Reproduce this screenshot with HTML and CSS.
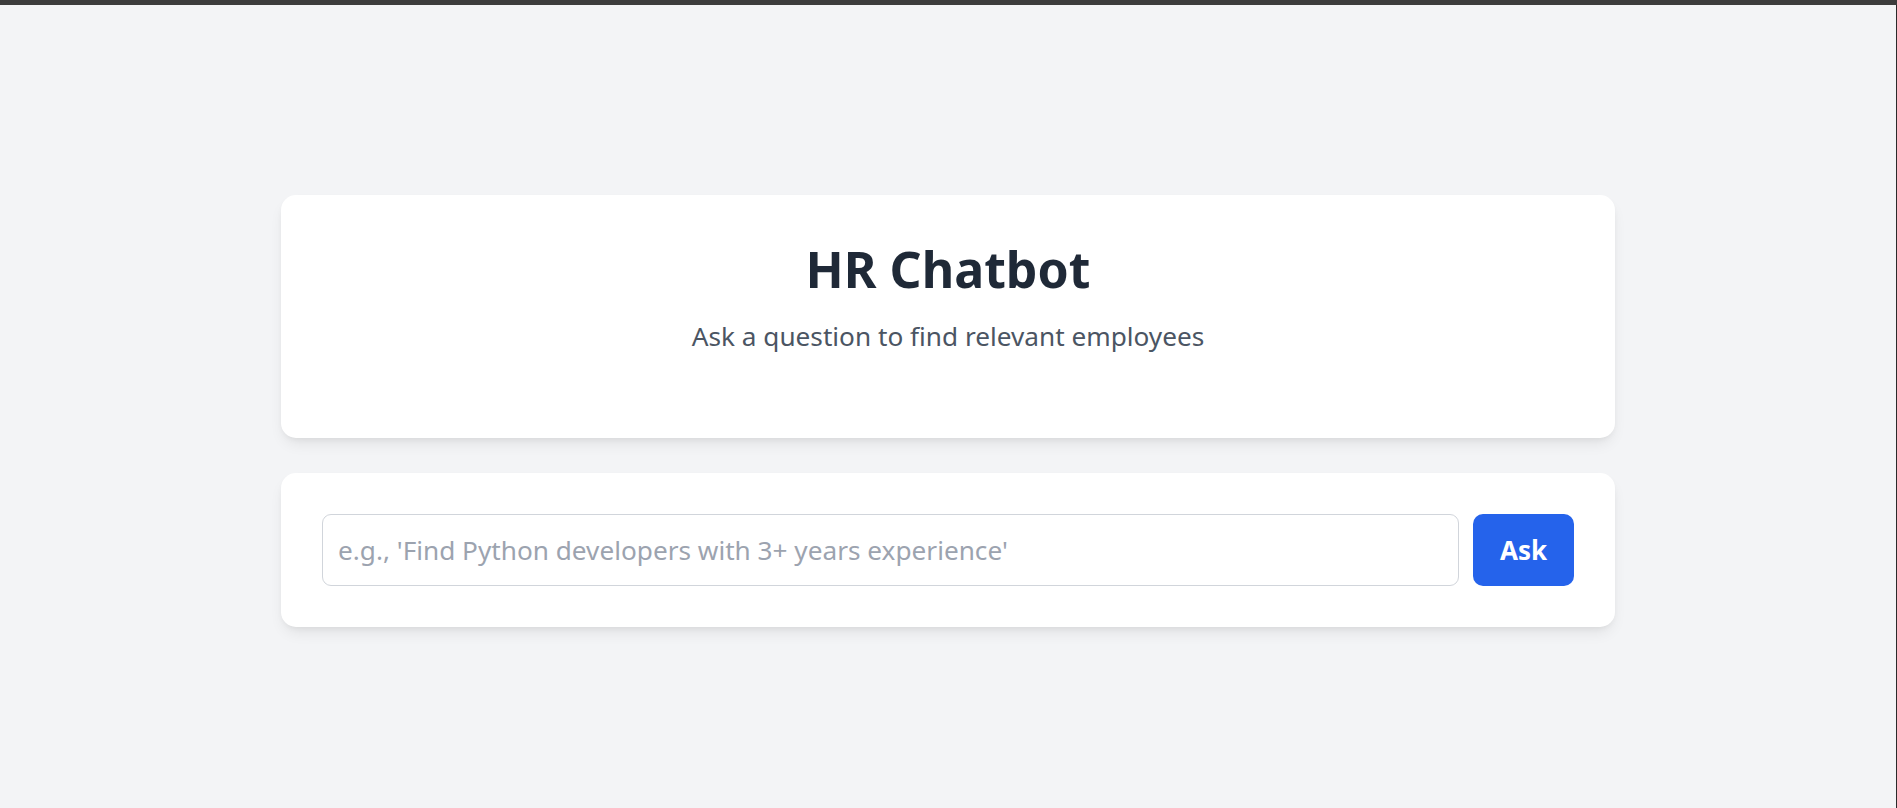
FILE: index.html
```html
<!DOCTYPE html>
<html lang="en">
<head>
<meta charset="utf-8">
<title>HR Chatbot</title>
<link rel="stylesheet" href="styles.css">
</head>
<body>
<div class="topbar"></div>
<div class="page">
  <main class="main">
    <div class="container">
      <section class="card header-card">
        <h1 class="title">HR Chatbot</h1>
        <p class="subtitle">Ask a question to find relevant employees</p>
      </section>
      <section class="card query-card">
        <form class="query-form" onsubmit="return false;">
          <input class="query-input" type="text" placeholder="e.g., 'Find Python developers with 3+ years experience'">
          <button class="ask-btn" type="submit">Ask</button>
        </form>
      </section>
    </div>
  </main>
  <div class="edge"></div>
</div>
</body>
</html>
```

FILE: styles.css
```css
* { box-sizing: border-box; }
html, body { margin: 0; padding: 0; height: 100%; }
body {
  background: #f3f4f6;
  font-family: "Noto Sans", "Open Sans", sans-serif;
  display: flex;
  flex-direction: column;
  overflow: hidden;
}
.topbar { height: 5px; background: #3c3c3c; flex: none; }
.page { flex: 1; display: flex; }
.main { flex: 1; padding-top: 190px; }
.edge { width: 1px; background: #2a2a2a; flex: none; }
.container {
  width: 1334px;
  margin: 0 auto;
  display: flex;
  flex-direction: column;
  gap: 35px;
}
.card {
  background: #ffffff;
  border-radius: 15px;
  box-shadow: 0 8px 16px -4px rgba(0,0,0,0.09), 0 3px 7px -3px rgba(0,0,0,0.08);
}
.header-card {
  height: 243px;
  padding-top: 44px;
  text-align: center;
}
.title {
  margin: 0;
  font-size: 50px;
  line-height: 60px;
  font-weight: 700;
  color: #1f2937;
}
.subtitle {
  margin: 21px 0 0;
  font-size: 26.2px;
  line-height: 32px;
  color: #4b5563;
}
.query-card { padding: 41px; }
.query-form { display: flex; gap: 14px; }
.query-input {
  flex: 1;
  height: 72px;
  border: 1px solid #d1d5db;
  border-radius: 9px;
  padding: 0 15px;
  font-family: inherit;
  font-size: 26.2px;
  color: #1f2937;
  outline: none;
  background: #fff;
}
.query-input::placeholder { color: #9ca3af; }
.ask-btn {
  width: 101px;
  height: 72px;
  border: none;
  border-radius: 10px;
  background: #2563eb;
  color: #ffffff;
  font-family: inherit;
  font-size: 26px;
  font-weight: 700;
  cursor: pointer;
}
```
